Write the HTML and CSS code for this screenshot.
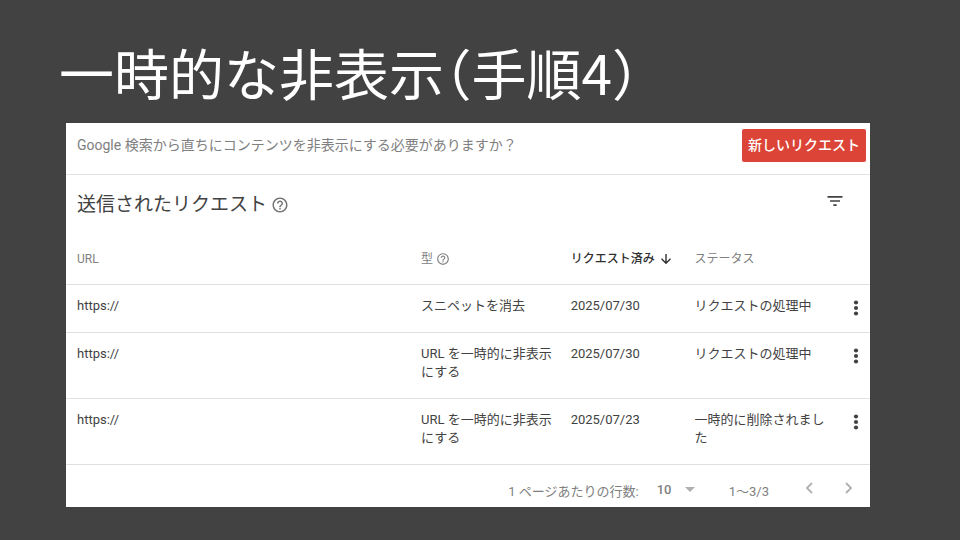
FILE: index.html
```
<!DOCTYPE html>
<html lang="ja">
<head>
<meta charset="utf-8">
<meta name="viewport" content="width=device-width, initial-scale=1">
<title>一時的な非表示（手順4）</title>
<link rel="stylesheet" href="styles.css">
</head>
<body>
<main class="slide">
  <h1 class="slide-title">一時的な非表示（手順4）</h1>
  <section class="panel">
    <div class="prompt">
      <p class="prompt-text">Google 検索から直ちにコンテンツを非表示にする必要がありますか？</p>
      <button class="new-request" type="button">新しいリクエスト</button>
    </div>
    <div class="list-head">
      <h2 class="list-title">送信されたリクエスト</h2>
      <button class="icon-button help" type="button" aria-label="ヘルプ">
        <svg class="help-large" viewBox="0 0 24 24"><path d="M11 18h2v-2h-2v2zm1-16C6.48 2 2 6.48 2 12s4.48 10 10 10 10-4.480 10-10S17.520 2 12 2zm0 18c-4.410 0-8-3.590-8-8s3.590-8 8-8 8 3.590 8 8-3.590 8-8 8zm0-14c-2.210 0-4 1.790-4 4h2c0-1.100.9-2 2-2s2 .9 2 2c0 2-3 1.750-3 5h2c0-2.250 3-2.500 3-5 0-2.210-1.790-4-4-4z"/></svg>
      </button>
      <button class="icon-button filter" type="button" aria-label="フィルタ">
        <svg class="filter-icon" viewBox="0 0 24 24"><path d="M10 18h4v-2h-4v2zM3 6v2h18V6H3zm3 7h12v-2H6v2z"/></svg>
      </button>
    </div>
    <table class="requests">
      <colgroup><col class="col-url"><col class="col-type"><col class="col-date"><col class="col-status"><col></colgroup>
      <thead>
        <tr>
          <th scope="col">URL</th>
          <th scope="col"><span class="head-label">型
            <svg class="help-small" viewBox="0 0 24 24"><path d="M11 18h2v-2h-2v2zm1-16C6.48 2 2 6.48 2 12s4.480 10 10 10 10-4.480 10-10S17.520 2 12 2zm0 18c-4.410 0-8-3.590-8-8s3.590-8 8-8 8 3.590 8 8-3.590 8-8 8zm0-14c-2.210 0-4 1.790-4 4h2c0-1.100.9-2 2-2s2 .9 2 2c0 2-3 1.750-3 5h2c0-2.250 3-2.500 3-5 0-2.210-1.790-4-4-4z"/></svg></span></th>
          <th scope="col" class="sorted" aria-sort="descending"><span class="head-label">リクエスト済み
            <svg class="sort-icon" viewBox="0 0 12 12"><path d="M6 1v9M1.500 5.700 6 10.200l4.500-4.500"/></svg></span></th>
          <th scope="col">ステータス</th>
          <td></td>
        </tr>
      </thead>
      <tbody>
        <tr>
          <td>https://</td><td>スニペットを消去</td><td>2025/07/30</td><td>リクエストの処理中</td>
          <td class="menu-cell"><button class="icon-button" type="button" aria-label="メニュー"><svg class="more-icon" viewBox="0 0 6 16"><circle cx="3" cy="2.500" r="2.100"/><circle cx="3" cy="8" r="2.100"/><circle cx="3" cy="13.500" r="2.100"/></svg></button></td>
        </tr>
        <tr>
          <td>https://</td><td>URL を一時的に非表示にする</td><td>2025/07/30</td><td>リクエストの処理中</td>
          <td class="menu-cell"><button class="icon-button" type="button" aria-label="メニュー"><svg class="more-icon" viewBox="0 0 6 16"><circle cx="3" cy="2.500" r="2.100"/><circle cx="3" cy="8" r="2.100"/><circle cx="3" cy="13.500" r="2.100"/></svg></button></td>
        </tr>
        <tr>
          <td>https://</td><td>URL を一時的に非表示にする</td><td>2025/07/23</td><td>一時的に削除されました</td>
          <td class="menu-cell"><button class="icon-button" type="button" aria-label="メニュー"><svg class="more-icon" viewBox="0 0 6 16"><circle cx="3" cy="2.500" r="2.100"/><circle cx="3" cy="8" r="2.100"/><circle cx="3" cy="13.500" r="2.100"/></svg></button></td>
        </tr>
      </tbody>
    </table>
    <div class="pager">
      <label for="rows">1 ページあたりの行数:</label>
      <span class="rows">
        <select id="rows"><option>10</option></select>
        <svg class="caret" viewBox="0 0 10 5"><path d="M0 0h10L5 5z"/></svg>
      </span>
      <span class="range">1～3/3</span>
      <button class="icon-button" type="button" aria-label="前へ"><svg class="chevron" viewBox="0 0 12 12"><path d="M9 1 4 6l5 5"/></svg></button>
      <button class="icon-button" type="button" aria-label="次へ"><svg class="chevron" viewBox="0 0 12 12"><path d="m3 1 5 5-5 5"/></svg></button>
    </div>
  </section>
</main>
</body>
</html>
```
FILE: styles.css
```
* {
  box-sizing: border-box;
}

body {
  margin: 0;
  min-height: 100vh;
  background: #424242;
  font-family: Roboto, "Noto Sans CJK JP", sans-serif;
}

h1, h2, p {
  margin: 0;
  font-weight: 400;
}

button, select {
  font: inherit;
}

svg {
  display: block;
  fill: currentColor;
}

.slide {
  padding: 31px 90px 33px 66px;
}

.slide-title {
  margin-left: -7px;
  padding-bottom: 12px;
  color: #fff;
  font-family: "Noto Sans CJK JP", sans-serif;
  font-size: 55px;
  line-height: 80px;
  font-feature-settings: "halt";
}

.panel {
  background: #fff;
  color: #424242;
}

.prompt {
  display: flex;
  justify-content: space-between;
  align-items: flex-start;
  padding: 6px 4px 12px 11px;
  border-bottom: 1px solid #e0e0e0;
}

.prompt-text {
  color: #808080;
  font-size: 14px;
  line-height: 32px;
}

.new-request {
  padding: 0 6px;
  border: 0;
  border-radius: 2px;
  background: #db4437;
  color: #fff;
  font-size: 14px;
  font-weight: 500;
  line-height: 33px;
}

.icon-button {
  padding: 0;
  border: 0;
  background: none;
  color: inherit;
}

.list-head {
  display: flex;
  align-items: center;
  height: 58px;
  padding: 2px 25px 0 11px;
}

.list-title {
  font-size: 19px;
  line-height: 28px;
}

.help {
  margin-left: 4px;
  color: #757575;
}

.help-large {
  width: 18px;
  height: 18px;
}

.filter {
  margin-left: auto;
  padding-bottom: 8px;
}

.filter-icon {
  width: 20px;
  height: 20px;
}

.requests {
  width: 100%;
  table-layout: fixed;
  border-collapse: collapse;
  font-size: 13px;
  line-height: 18px;
}

.col-url { width: 42.8%; }
.col-type { width: 18.6%; }
.col-date { width: 15.4%; }
.col-status { width: 18.2%; }

.requests th,
.requests td {
  padding: 12px 0 17px 11px;
  border-bottom: 1px solid #e0e0e0;
  text-align: left;
  vertical-align: top;
}

.requests th {
  padding: 17px 0 16px 11px;
  color: #808080;
  font-size: 12px;
  font-weight: 400;
}

.requests .sorted {
  color: #303030;
  font-weight: 500;
}

.head-label {
  display: flex;
  align-items: center;
  gap: 3px;
}

.help-small {
  width: 14px;
  height: 14px;
}

.sort-icon {
  width: 12px;
  height: 12px;
  margin-left: 2px;
  fill: none;
  stroke: currentColor;
  stroke-width: 1.4;
}

.requests .menu-cell {
  padding: 15px 11px 0 0;
}

.menu-cell .icon-button {
  display: block;
  margin-left: auto;
}

.more-icon {
  width: 6px;
  height: 16px;
}

.pager {
  display: flex;
  justify-content: flex-end;
  align-items: center;
  height: 42px;
  padding: 8px 15px 0 11px;
  color: #808080;
  font-size: 12px;
}

.pager label {
  font-size: 13px;
}

.rows {
  display: flex;
  align-items: center;
  margin-left: 18px;
  padding-bottom: 1px;
}

.rows select {
  width: 28px;
  padding: 0;
  border: 0;
  appearance: none;
  background: none;
  color: inherit;
  font-size: 13px;
  font-weight: 500;
}

.caret {
  width: 10px;
  height: 5px;
  color: #b0b0b0;
}

.range {
  margin: 0 34px;
  font-size: 13px;
}

.pager .icon-button {
  padding-bottom: 4px;
}

.chevron {
  width: 12px;
  height: 12px;
  fill: none;
  stroke: #b0b0b0;
  stroke-width: 1.8;
}

.pager .icon-button + .icon-button {
  margin-left: 28px;
}
```
